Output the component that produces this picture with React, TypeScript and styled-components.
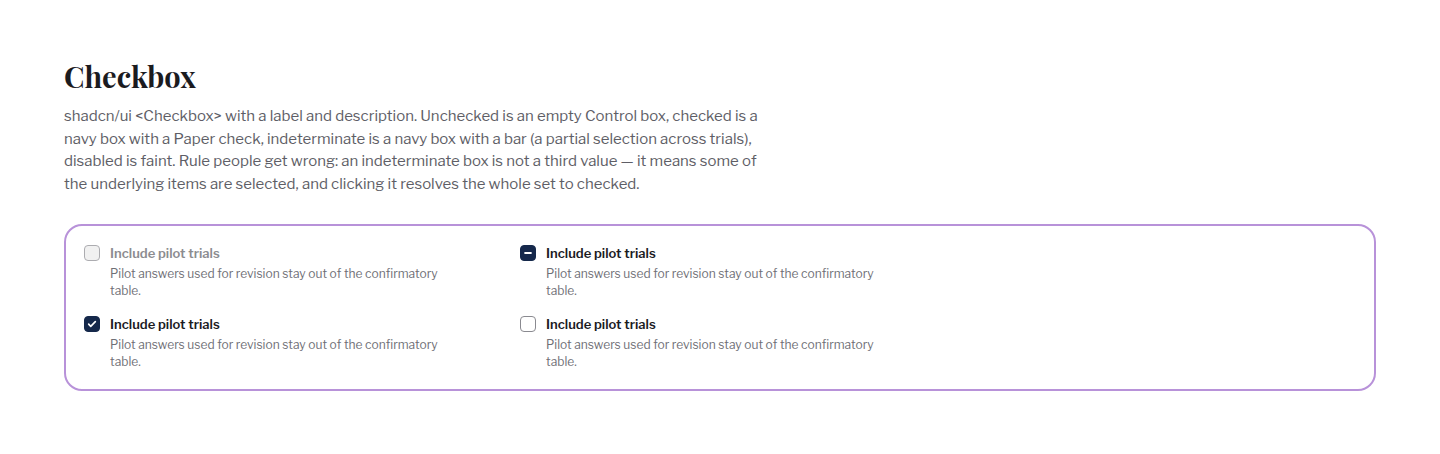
import React from 'react';
import styled, { createGlobalStyle } from 'styled-components';

const Colors = {
  Ink: '#1b1b1f',
  Muted: '#5e5e66',
  Faint: '#6f6f76',
  Navy: '#15284b',
  Paper: '#ffffff',
  Line: '#8a8a90',
  Accent: '#b892d9',
};

const GlobalStyle = createGlobalStyle`
  body {
    margin: 0;
    background: ${Colors.Paper};
    font-family: 'Libre Franklin', Inter, 'Noto Sans', sans-serif;
  }
`;

const Page = styled.main`
  padding: 56px 64px 64px 64px;
`;

const Title = styled.h1`
  margin: 0 0 9px 0;
  font-family: 'Playfair Display', 'Liberation Serif', serif;
  font-size: 29px;
  line-height: 40px;
  font-weight: 700;
  color: ${Colors.Ink};
`;

const Lead = styled.p`
  margin: 0 0 29px 0;
  max-width: 700px;
  font-size: 15px;
  line-height: 22.5px;
  color: ${Colors.Muted};
`;

const Panel = styled.section`
  border: 2px solid ${Colors.Accent};
  border-radius: 18px;
  padding: 18px 18px 19px 18px;
  display: grid;
  grid-template-columns: 436px 436px;
  row-gap: 16px;
`;

const Item = styled.label<{ $disabled?: boolean }>`
  display: grid;
  grid-template-columns: 16px 1fr;
  column-gap: 10px;
  align-items: start;
  cursor: ${({ $disabled }) => ($disabled ? 'not-allowed' : 'pointer')};
`;

type BoxState = 'unchecked' | 'checked' | 'indeterminate';

const Box = styled.span<{ $state: BoxState; $disabled?: boolean }>`
  width: 16px;
  height: 16px;
  margin-top: 1px;
  box-sizing: border-box;
  border-radius: 4px;
  display: flex;
  align-items: center;
  justify-content: center;
  border: 1px solid
    ${({ $state }) => ($state === 'unchecked' ? Colors.Line : Colors.Navy)};
  background: ${({ $state, $disabled }) =>
    $state !== 'unchecked' ? Colors.Navy : $disabled ? '#ececec' : Colors.Paper};
  opacity: ${({ $disabled }) => ($disabled ? 0.7 : 1)};
  color: ${Colors.Paper};
`;

const Text = styled.div`
  display: flex;
  flex-direction: column;
  gap: 3px;
`;

const Label = styled.span<{ $disabled?: boolean }>`
  font-size: 13px;
  line-height: 18px;
  font-weight: 600;
  color: ${({ $disabled }) => ($disabled ? '#8c8c90' : Colors.Ink)};
`;

const Description = styled.span`
  max-width: 340px;
  font-size: 12px;
  line-height: 17px;
  color: ${Colors.Faint};
`;

const CheckMark = () => (
  <svg width="10" height="10" viewBox="0 0 24 24" fill="none" stroke="currentColor" strokeWidth="4" strokeLinecap="round" strokeLinejoin="round">
    <path d="M4 12.5l5 5L20 6.5" />
  </svg>
);

const Bar = () => (
  <svg width="10" height="10" viewBox="0 0 24 24" fill="none" stroke="currentColor" strokeWidth="4.5" strokeLinecap="round">
    <path d="M5 12h14" />
  </svg>
);

type CheckboxFieldProps = {
  state: BoxState;
  disabled?: boolean;
  label: string;
  description: string;
};

const CheckboxField: React.FC<CheckboxFieldProps> = ({ state, disabled, label, description }) => (
  <Item $disabled={disabled}>
    <Box $state={state} $disabled={disabled} role="checkbox" aria-checked={state === 'indeterminate' ? 'mixed' : state === 'checked'}>
      {state === 'checked' && <CheckMark />}
      {state === 'indeterminate' && <Bar />}
    </Box>
    <Text>
      <Label $disabled={disabled}>{label}</Label>
      <Description>{description}</Description>
    </Text>
  </Item>
);

const label = 'Include pilot trials';
const description = 'Pilot answers used for revision stay out of the confirmatory table.';

const fields: { state: BoxState; disabled?: boolean }[] = [
  { state: 'unchecked', disabled: true },
  { state: 'indeterminate' },
  { state: 'checked' },
  { state: 'unchecked' },
];

const App: React.FC = () => (
  <>
    <GlobalStyle />
    <Page>
      <Title>Checkbox</Title>
      <Lead>
        shadcn/ui &lt;Checkbox&gt; with a label and description. Unchecked is an empty Control box,
        checked is a navy box with a Paper check, indeterminate is a navy box with a bar (a partial
        selection across trials), disabled is faint. Rule people get wrong: an indeterminate box is
        not a third value — it means some of the underlying items are selected, and clicking it
        resolves the whole set to checked.
      </Lead>
      <Panel>
        {fields.map((f, i) => (
          <CheckboxField key={i} state={f.state} disabled={f.disabled} label={label} description={description} />
        ))}
      </Panel>
    </Page>
  </>
);

export default App;
